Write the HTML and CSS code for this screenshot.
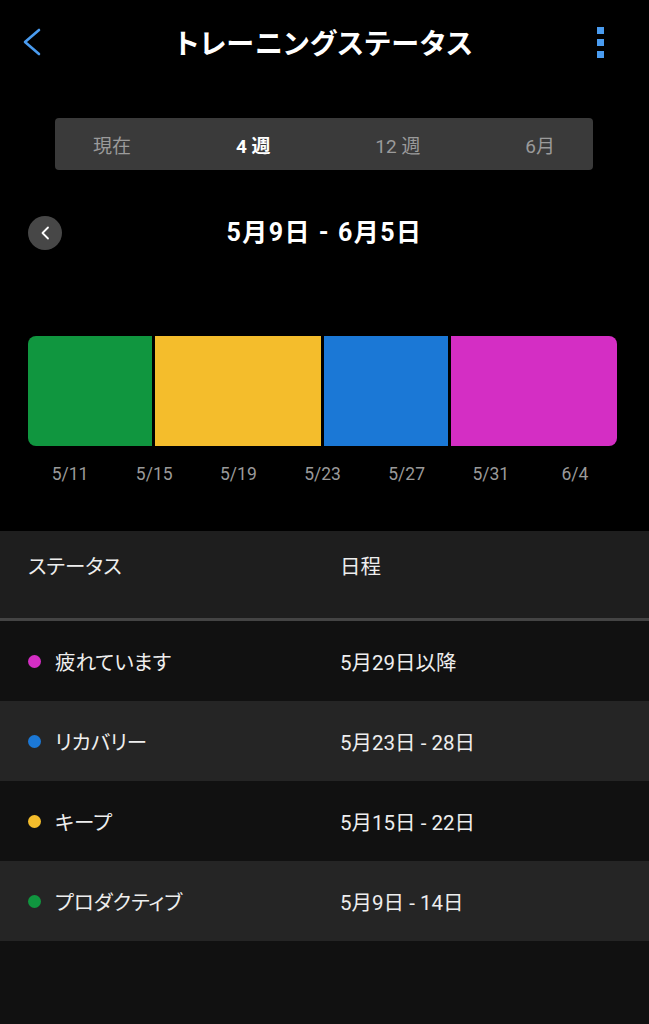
FILE: index.html
```html
<!DOCTYPE html>
<html lang="ja">
<head>
  <meta charset="UTF-8" />
  <meta name="viewport" content="width=device-width, initial-scale=1.0"/>
  <title>トレーニングステータス</title>
  <link rel="stylesheet" href="styles.css">
</head>
<body>
  <header class="topbar">
    <button class="icon-btn back" aria-label="戻る">
      <svg width="20" height="28" viewBox="0 0 20 28"><polyline points="17,2 3,14 17,26" fill="none" stroke="#4a9cf0" stroke-width="2.6" stroke-linecap="round" stroke-linejoin="round"/></svg>
    </button>
    <h1>トレーニングステータス</h1>
    <button class="icon-btn more" aria-label="メニュー">
      <span></span><span></span><span></span>
    </button>
  </header>

  <nav class="tabs">
    <a href="#">現在</a>
    <a href="#" class="active">4 週</a>
    <a href="#">12 週</a>
    <a href="#">6月</a>
  </nav>

  <div class="range">
    <button class="prev" aria-label="前へ">
      <svg width="10" height="14" viewBox="0 0 10 14"><polyline points="8,1.5 2.5,7 8,12.5" fill="none" stroke="#fff" stroke-width="1.8" stroke-linecap="round" stroke-linejoin="round"/></svg>
    </button>
    <h2>5月9日 - 6月5日</h2>
    <span></span>
  </div>

  <!-- 各区間の幅は日数に比例 -->
  <div class="bar">
    <div class="seg productive" style="flex: 6"></div>
    <div class="seg keep" style="flex: 8"></div>
    <div class="seg recovery" style="flex: 6"></div>
    <div class="seg tired" style="flex: 8"></div>
  </div>
  <div class="axis">
    <span>5/11</span><span>5/15</span><span>5/19</span><span>5/23</span><span>5/27</span><span>5/31</span><span>6/4</span>
  </div>

  <section class="table">
    <div class="row head">
      <span>ステータス</span>
      <span>日程</span>
    </div>
    <div class="row">
      <span class="status"><i class="dot tired"></i>疲れています</span>
      <span>5月29日以降</span>
    </div>
    <div class="row alt">
      <span class="status"><i class="dot recovery"></i>リカバリー</span>
      <span>5月23日 - 28日</span>
    </div>
    <div class="row">
      <span class="status"><i class="dot keep"></i>キープ</span>
      <span>5月15日 - 22日</span>
    </div>
    <div class="row alt">
      <span class="status"><i class="dot productive"></i>プロダクティブ</span>
      <span>5月9日 - 14日</span>
    </div>
  </section>
</body>
</html>
```

FILE: styles.css
```css
:root {
  --green: #10963f;
  --yellow: #f4bd2c;
  --blue: #1b78d6;
  --magenta: #d42ec4;
  --row: #111;
  --row-alt: #252525;
}

* { box-sizing: border-box; }

body {
  margin: 0;
  min-height: 100vh;
  display: flex;
  flex-direction: column;
  background: #000;
  color: #fff;
  font-family: Roboto, "Noto Sans CJK JP", sans-serif;
  font-feature-settings: "palt";
}

button {
  background: none;
  border: none;
  padding: 0;
  cursor: pointer;
}

.topbar {
  height: 84px;
  display: grid;
  grid-template-columns: 40px 1fr 40px;
  align-items: center;
  padding: 0 22px;
}
.topbar h1 {
  margin: 0;
  text-align: center;
  font-size: 28px;
  font-weight: 700;
  letter-spacing: 1px;
}
.icon-btn.back { display: flex; align-items: center; }
.icon-btn.more {
  display: flex;
  flex-direction: column;
  align-items: flex-start;
  gap: 5px;
  padding-left: 10px;
}
.icon-btn.more span {
  width: 7px;
  height: 7px;
  background: #4a9cf0;
}

.tabs {
  margin: 34px 56px 0 55px;
  height: 52px;
  display: flex;
  align-items: center;
  justify-content: space-between;
  padding: 0 38px;
  background: #3a3a3a;
  border-radius: 4px;
}
.tabs a {
  text-decoration: none;
  color: #9b9b9b;
  font-size: 19px;
}
.tabs a.active {
  color: #fff;
  font-weight: 700;
}

.range {
  margin-top: 46px;
  padding: 0 28px;
  display: grid;
  grid-template-columns: 34px 1fr 34px;
  align-items: center;
}
.range .prev {
  width: 34px;
  height: 34px;
  border-radius: 50%;
  background: #474747;
  display: flex;
  align-items: center;
  justify-content: center;
}
.range h2 {
  margin: 0;
  text-align: center;
  font-size: 25px;
  line-height: 34px;
  font-weight: 700;
  letter-spacing: 1.5px;
}

.bar {
  margin: 86px 32px 0 28px;
  height: 110px;
  display: flex;
  gap: 3px;
  border-radius: 8px;
  overflow: hidden;
}
.seg.productive, .dot.productive { background: var(--green); }
.seg.keep, .dot.keep { background: var(--yellow); }
.seg.recovery, .dot.recovery { background: var(--blue); }
.seg.tired, .dot.tired { background: var(--magenta); }

.axis {
  margin: 16px 32px 0 28px;
  display: grid;
  grid-template-columns: repeat(7, 1fr);
  text-align: center;
  color: #9a9a9a;
  font-size: 17.5px;
  line-height: 24px;
}

.table {
  margin-top: 45px;
  flex: 1;
  background: var(--row);
  font-size: 20.5px;
  color: #eee;
}
.row {
  height: 80px;
  display: grid;
  grid-template-columns: 312px 1fr;
  align-items: center;
  padding-left: 28px;
}
.row.alt { background: var(--row-alt); }
.row.head {
  height: 90px;
  align-items: start;
  padding-top: 24px;
  line-height: 24px;
  background: #1e1e1e;
  border-bottom: 3px solid #444;
}
.status {
  display: flex;
  align-items: center;
  gap: 14px;
}
.dot {
  width: 13px;
  height: 13px;
  border-radius: 50%;
}
```
